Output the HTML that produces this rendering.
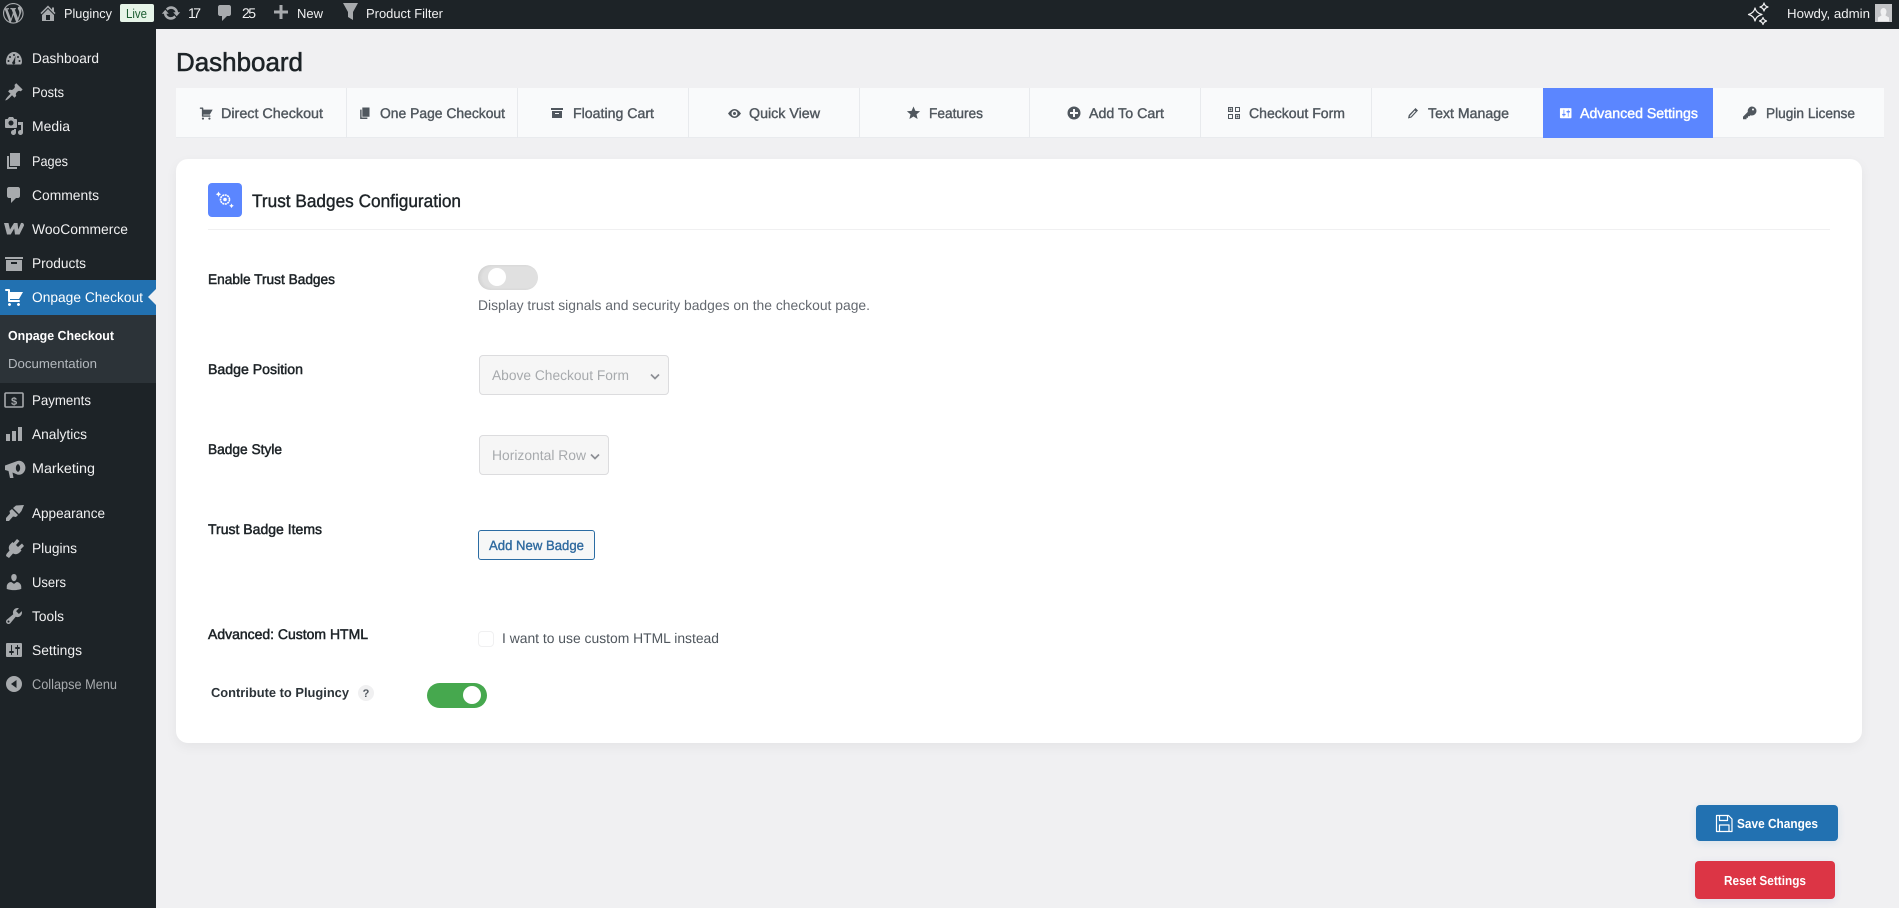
<!DOCTYPE html>
<html lang="en">
<head>
<meta charset="utf-8">
<title>Dashboard - Plugincy</title>
<style>
html,body{margin:0;padding:0;width:1899px;height:908px;overflow:hidden;background:#f0f0f2;font-family:"Liberation Sans",sans-serif}
.b{position:absolute;box-sizing:border-box}
svg{position:absolute;left:0;top:0}
text{font-family:"Liberation Sans",sans-serif;text-rendering:geometricPrecision}
.s{font-size:14px;fill:#f0f0f1}
.a{font-size:13px;fill:#f0f0f1}
.t{font-size:14px;fill:#50575e;stroke:#50575e;stroke-width:.4}
.l{font-size:14px;fill:#1d2327;stroke:#1d2327;stroke-width:.5}
.i{fill:#a7aaad}
.n{fill:#50575e}
</style>
</head>
<body>
<div class="b" style="left:0;top:0;width:1899px;height:29px;background:#1d2327"></div>
<div class="b" style="left:0;top:29px;width:156px;height:879px;background:#1d2327"></div>
<div class="b" style="left:0;top:280px;width:156px;height:35px;background:#2271b1"></div>
<div class="b" style="left:0;top:315px;width:156px;height:68px;background:#2c3338"></div>

<div class="b" style="left:176px;top:88px;width:1708px;height:50px;background:#f9fafb;border-bottom:1px solid #e9ebee"></div>
<div class="b" style="left:346px;top:88px;width:1px;height:50px;background:#e8eaed"></div>
<div class="b" style="left:517px;top:88px;width:1px;height:50px;background:#e8eaed"></div>
<div class="b" style="left:688px;top:88px;width:1px;height:50px;background:#e8eaed"></div>
<div class="b" style="left:859px;top:88px;width:1px;height:50px;background:#e8eaed"></div>
<div class="b" style="left:1029px;top:88px;width:1px;height:50px;background:#e8eaed"></div>
<div class="b" style="left:1200px;top:88px;width:1px;height:50px;background:#e8eaed"></div>
<div class="b" style="left:1371px;top:88px;width:1px;height:50px;background:#e8eaed"></div>
<div class="b" style="left:1543px;top:88px;width:170px;height:50px;background:#5b86ff"></div>

<div class="b" style="left:176px;top:159px;width:1686px;height:584px;background:#fff;border-radius:12px;box-shadow:0 4px 12px rgba(0,0,0,.05)"></div>
<div class="b" style="left:208px;top:183px;width:34px;height:34px;background:#5b86ff;border-radius:4px"></div>
<div class="b" style="left:208px;top:229px;width:1622px;height:1px;background:#f0f0f1"></div>

<div class="b" style="left:478px;top:265px;width:60px;height:25px;background:#e0e0e0;border-radius:13px;box-shadow:inset 2px 0 3px rgba(0,0,0,.07)"></div>
<div class="b" style="left:488px;top:268px;width:18px;height:18px;background:#fff;border-radius:50%"></div>
<div class="b" style="left:479px;top:355px;width:190px;height:40px;background:#f6f6f6;border:1px solid #dcdcde;border-radius:4px"></div>
<div class="b" style="left:479px;top:435px;width:130px;height:40px;background:#f6f6f6;border:1px solid #dcdcde;border-radius:4px"></div>
<div class="b" style="left:478px;top:530px;width:117px;height:30px;background:#f6f7f7;border:1px solid #2b6ca3;border-radius:3px"></div>
<div class="b" style="left:478px;top:631px;width:16px;height:16px;background:#fff;border:1px solid #f0f0f1;border-radius:4px"></div>
<div class="b" style="left:358px;top:685px;width:16px;height:16px;background:#f0f0f1;border-radius:50%"></div>
<div class="b" style="left:427px;top:683px;width:60px;height:25px;background:#46a84e;border-radius:13px"></div>
<div class="b" style="left:463px;top:686px;width:18px;height:18px;background:#fff;border-radius:50%"></div>

<div class="b" style="left:1696px;top:805px;width:142px;height:36px;background:#2271b1;border-radius:4px;box-shadow:0 2px 8px rgba(34,113,177,.12)"></div>
<div class="b" style="left:1695px;top:861px;width:140px;height:38px;background:#dc3545;border-radius:4px;box-shadow:0 2px 8px rgba(60,80,180,.1)"></div>

<svg width="1899" height="908" viewBox="0 0 1899 908" xmlns="http://www.w3.org/2000/svg">
<!-- admin bar -->
<path class="i" transform="translate(3,3) scale(1.03)" fill-rule="evenodd" d="M20 10c0-5.510-4.490-10-10-10C4.480 0 0 4.490 0 10c0 5.520 4.480 10 10 10 5.510 0 10-4.480 10-10zM7.780 15.370L4.370 6.220c.550-.020 1.170-.080 1.170-.080.500-.060.440-1.130-.060-1.110 0 0-1.450.110-2.370.110-.180 0-.370 0-.580-.010C4.120 2.690 6.870 1.110 10 1.110c2.330 0 4.450.870 6.050 2.340-.680-.110-1.650.390-1.650 1.580 0 .740.450 1.360.900 2.100.350.610.550 1.360.550 2.460 0 1.490-1.400 5-1.400 5l-3.030-8.370c.540-.020.820-.170.820-.170.500-.050.440-1.250-.060-1.220 0 0-1.440.120-2.380.120-.870 0-2.330-.120-2.330-.120-.500-.030-.560 1.200-.060 1.220l.920.080 1.260 3.410zM17.410 10c.240-.640.740-1.870.430-4.250.700 1.290 1.050 2.710 1.050 4.250 0 3.290-1.730 6.240-4.400 7.780.970-2.590 1.940-5.200 2.920-7.780zM6.100 18.090C3.120 16.650 1.110 13.530 1.110 10c0-1.300.230-2.480.720-3.590C3.250 10.300 4.670 14.200 6.100 18.090zm4.030-6.630l2.580 6.980c-.850.290-1.740.450-2.710.450-.790 0-1.570-.110-2.290-.330.810-2.380 1.620-4.730 2.420-7.100z"/>
<path class="i" transform="translate(38,3)" d="M16 8.500l1.530 1.530-1.060 1.060L10 4.620l-6.470 6.470-1.060-1.060L10 2.500l4 4v-2h2v4zm-6-2.460l6 5.990V18H4v-5.970zM12 17v-5H8v5h4z"/>
<text class="a" x="64" y="18" textLength="48" lengthAdjust="spacingAndGlyphs">Plugincy</text>
<rect x="120" y="4" width="34" height="18" rx="2" fill="#e6f4e8"/>
<text x="126" y="18" font-size="13" fill="#1a5c30" textLength="21" lengthAdjust="spacingAndGlyphs">Live</text>
<path class="i" transform="translate(161,3)" d="M10.200 3.280c3.530 0 6.430 2.610 6.920 6h2.080l-3.500 4-3.500-4h2.320c-.450-1.970-2.210-3.440-4.320-3.440-1.450 0-2.730.710-3.540 1.800L4.950 5.650c1.270-1.440 3.150-2.370 5.250-2.370zm-.400 13.440c-3.520 0-6.430-2.610-6.920-6H.800l3.500-4c1.170 1.330 2.330 2.670 3.500 4H5.480c.450 1.970 2.210 3.440 4.320 3.440 1.450 0 2.730-.710 3.540-1.810l1.710 2c-1.270 1.450-3.150 2.370-5.250 2.370z"/>
<text class="a" x="188" y="18" textLength="13" font-size="14" style="font-size:14px">17</text>
<path class="i" transform="translate(215,3)" d="M5 2h9c1.100 0 2 .9 2 2v7c0 1.100-.9 2-2 2h-2l-5 5v-5H5c-1.100 0-2-.9-2-2V4c0-1.100.9-2 2-2z"/>
<text class="a" x="242" y="18" textLength="14" style="font-size:14px">25</text>
<path class="i" transform="translate(271,3)" d="M17 7.500v3h-5.500V16h-3v-5.500H3v-3h5.500V2h3v5.500z"/>
<text class="a" x="297" y="18" textLength="26">New</text>
<path class="i" d="M343 3h15l-5 9v8l-5-3v-5z"/>
<text class="a" x="366" y="18" textLength="77" lengthAdjust="spacingAndGlyphs">Product Filter</text>
<g fill="none" stroke="#f0f0f1" stroke-width="1.200" stroke-linejoin="round">
<path d="M1755 8Q1756 13 1762 14.500Q1756 16 1755 21Q1754 16 1748.500 14.500Q1754 13 1755 8z"/>
<path d="M1764 3Q1764.500 6 1768 7Q1764.500 8 1764 11Q1763.500 8 1760 7Q1763.500 6 1764 3z"/>
<path d="M1763 17.500Q1763.500 20 1766.500 21Q1763.500 22 1763 24.500Q1762.500 22 1759.500 21Q1762.500 20 1763 17.500z"/>
</g>
<text class="a" x="1787" y="18" textLength="83" lengthAdjust="spacingAndGlyphs">Howdy, admin</text>
<rect x="1875" y="4" width="17" height="18" fill="#c3c4c7"/>
<path fill="#f0f0f1" d="M1883.500 8a3 3.500 0 0 1 3 3.500c0 2-1 3-1 4l3.500 2v4h-11v-4l3.500-2c0-1-1-2-1-4a3 3.500 0 0 1 3-3.500z"/>

<!-- sidebar icons -->
<g class="i" fill="#a7aaad">
<path fill-rule="evenodd" d="M6 61.500a8 9.500 0 0 1 16 0c0 1.500-.5 2.500-1 3H7c-.5-.5-1-1.500-1-3zM14 54a1 1 0 1 0 0 2a1 1 0 0 0 0-2zM10 56a1 1 0 1 0 0 2a1 1 0 0 0 0-2zM18 56a1 1 0 1 0 0 2a1 1 0 0 0 0-2zM8.500 60a1 1 0 1 0 0 2a1 1 0 0 0 0-2zM19.500 60a1 1 0 1 0 0 2a1 1 0 0 0 0-2zM15.500 56l-2.500 5.500a1.500 1.500 0 1 0 2 .5z"/>
<path transform="translate(4,82)" d="M10.440 3.020l1.820-1.820 6.360 6.350-1.830 1.820c-1.050-.680-2.480-.570-3.410.360l-.750.750c-.920.930-1.040 2.350-.350 3.410l-1.830 1.820-2.410-2.410-2.800 2.790c-.420.420-3.380 2.710-3.800 2.290s1.860-3.390 2.280-3.810l2.790-2.790L4.100 9.360l1.830-1.820c1.050.690 2.480.57 3.400-.360l.750-.750c.93-.92 1.050-2.350.36-3.410z"/>
<path transform="translate(4,116)" fill-rule="evenodd" d="M13 11V4c0-.550-.450-1-1-1h-1.670L9 1H5L3.670 3H2c-.550 0-1 .450-1 1v7c0 .550.450 1 1 1h10c.550 0 1-.450 1-1zM7 4.500c1.380 0 2.500 1.120 2.500 2.500S8.380 9.500 7 9.500 4.500 8.380 4.500 7 5.620 4.500 7 4.500zM14 6h5v10.500c0 1.380-1.120 2.500-2.500 2.500S14 17.880 14 16.500s1.120-2.500 2.500-2.500c.170 0 .340.020.500.050V9h-3V6zm-4 8.050V13h2v3.500c0 1.380-1.120 2.500-2.500 2.500S7 17.880 7 16.500 8.120 14 9.500 14c.170 0 .340.020.500.050z"/>
<path transform="translate(4,151)" d="M6 15V2h10v13H6zm-1 1h8v2H3V5h2v11z"/>
<path transform="translate(4,185)" d="M5 2h9c1.100 0 2 .9 2 2v7c0 1.100-.9 2-2 2h-2l-5 5v-5H5c-1.100 0-2-.9-2-2V4c0-1.100.9-2 2-2z"/>
<path transform="translate(4,219)" d="M0 4h4.500l1.500 6.500L10 4h3.500l.8 6.500L17 4q3-.5 3 2.500l-4.500 9h-4.500l-.8-6-3.500 6H3z"/>
<path transform="translate(4,253)" fill-rule="evenodd" d="M1 4h18v2H1zM2 7h16v11H2zM7 9v2h6V9z"/>
<path transform="translate(4,287)" fill="#fff" d="M6 13h9c.550 0 1 .450 1 1s-.450 1-1 1H5c-.550 0-1-.450-1-1V4H2c-.550 0-1-.450-1-1s.450-1 1-1h3c.550 0 1 .450 1 1v2h13l-4 7H6v1zm-.500 3c.830 0 1.500.670 1.500 1.500S6.330 19 5.500 19 4 18.330 4 17.500 4.670 16 5.500 16zm9 0c.830 0 1.500.670 1.500 1.500s-.670 1.500-1.500 1.500-1.500-.670-1.500-1.500.670-1.500 1.500-1.500z"/>
<path transform="translate(4,424)" d="M2 10h4v7H2zM8 7h4v10H8zM14 3h4v14h-4z"/>
<path transform="translate(4,458)" fill-rule="evenodd" d="M1 7.500L12 3.500a6.500 7 0 1 1 0 12.500L8.500 14.500 9.500 20H6L4.500 13 1 12zM14 6a4 4.500 0 0 0 0 8a4 4.500 0 0 0 0-8z"/>
<path transform="translate(4,503)" d="M20 2l-8 .5-3 2.500 6 6 2.500-3zM8 6l6 6-2 2-3-.5-4 4.500H2v-3l4-4.500-.5-2.500z"/>
<path transform="translate(4,538)" d="M13 1l2.500 2-3.500 4 2 2 4-3.500 2 2.500-3.500 3.500 1 1-2.500 2.500c-2 1.500-4 1.500-6 .5L5 20 2 18l.5-2 3-3.500c-1-2-1-4 .5-6L8.500 4l1 1z"/>
<path transform="translate(4,572)" d="M10 9.250c-2.270 0-2.730-3.440-2.730-3.440C7 4.020 7.820 2 9.970 2c2.160 0 2.980 2.020 2.710 3.810 0 0-.410 3.440-2.680 3.440zm0 2.570L12.720 10c2.390 0 4.520 2.330 4.520 4.530v2.490s-3.650 1.130-7.240 1.130c-3.650 0-7.240-1.130-7.240-1.130v-2.490c0-2.250 1.940-4.480 4.470-4.480z"/>
<path transform="translate(4,606)" fill-rule="evenodd" d="M16.680 9.770c-1.340 1.340-3.300 1.670-4.950.990l-5.410 6.520c-.990.990-2.590.990-3.580 0s-.990-2.590 0-3.570l6.520-5.420c-.680-1.650-.350-3.610.990-4.950 1.280-1.280 3.120-1.620 4.720-1.060l-2.890 2.890 2.820 2.820 2.860-2.870c.530 1.580.180 3.390-1.080 4.650zM3.810 16.210c.400.390 1.030.390 1.420 0 .400-.400.400-1.030 0-1.430-.390-.390-1.020-.390-1.420 0-.390.400-.390 1.030 0 1.430z"/>
<path transform="translate(4,640)" fill-rule="evenodd" d="M18 16V4c0-.550-.450-1-1-1H3c-.550 0-1 .450-1 1v12c0 .550.450 1 1 1h14c.550 0 1-.450 1-1zM8 11h1c.550 0 1 .450 1 1s-.450 1-1 1H8v1.500c0 .280-.220.500-.500.500s-.500-.220-.500-.500V13H6c-.550 0-1-.450-1-1s.450-1 1-1h1V5.500c0-.280.220-.500.500-.500s.500.220.500.500V11zm5-2h-1c-.550 0-1-.450-1-1s.450-1 1-1h1V5.500c0-.280.220-.500.500-.500s.500.220.500.500V7h1c.550 0 1 .450 1 1s-.450 1-1 1h-1v5.500c0 .280-.220.500-.500.500s-.500-.220-.500-.500V9z"/>
<path transform="translate(4,674)" fill-rule="evenodd" d="M10 2a8 8 0 1 0 0 16a8 8 0 0 0 0-16zM12.500 6v8L7 10z"/>
</g>
<rect x="5" y="393" width="18" height="14" rx="1" fill="none" stroke="#a7aaad" stroke-width="1.600"/>
<text x="14" y="405" font-size="11" font-weight="bold" fill="#a7aaad" text-anchor="middle">$</text>
<path d="M156 289l-8 8 8 8z" fill="#f0f0f2"/>

<!-- sidebar text -->
<text class="s" x="32" y="63" textLength="67" lengthAdjust="spacingAndGlyphs">Dashboard</text>
<text class="s" x="32" y="97" textLength="32" lengthAdjust="spacingAndGlyphs">Posts</text>
<text class="s" x="32" y="131" textLength="38" lengthAdjust="spacingAndGlyphs">Media</text>
<text class="s" x="32" y="166" textLength="36" lengthAdjust="spacingAndGlyphs">Pages</text>
<text class="s" x="32" y="200" textLength="67" lengthAdjust="spacingAndGlyphs">Comments</text>
<text class="s" x="32" y="234" textLength="96" lengthAdjust="spacingAndGlyphs">WooCommerce</text>
<text class="s" x="32" y="268" textLength="54" lengthAdjust="spacingAndGlyphs">Products</text>
<text class="s" x="32" y="302" textLength="111" lengthAdjust="spacingAndGlyphs" style="fill:#fff">Onpage Checkout</text>
<text x="8" y="340" font-size="13" font-weight="bold" fill="#fff" textLength="106" lengthAdjust="spacingAndGlyphs">Onpage Checkout</text>
<text x="8" y="368" font-size="13" fill="#b4b9be" textLength="89" lengthAdjust="spacingAndGlyphs">Documentation</text>
<text class="s" x="32" y="405" textLength="59" lengthAdjust="spacingAndGlyphs">Payments</text>
<text class="s" x="32" y="439" textLength="55" lengthAdjust="spacingAndGlyphs">Analytics</text>
<text class="s" x="32" y="473" textLength="63" lengthAdjust="spacingAndGlyphs">Marketing</text>
<text class="s" x="32" y="518" textLength="73" lengthAdjust="spacingAndGlyphs">Appearance</text>
<text class="s" x="32" y="553" textLength="45" lengthAdjust="spacingAndGlyphs">Plugins</text>
<text class="s" x="32" y="587" textLength="34" lengthAdjust="spacingAndGlyphs">Users</text>
<text class="s" x="32" y="621" textLength="32" lengthAdjust="spacingAndGlyphs">Tools</text>
<text class="s" x="32" y="655" textLength="50" lengthAdjust="spacingAndGlyphs">Settings</text>
<text class="s" x="32" y="689" textLength="85" lengthAdjust="spacingAndGlyphs" style="fill:#a7aaad">Collapse Menu</text>

<!-- heading -->
<text x="176" y="71" font-size="26" fill="#1d2327" stroke="#1d2327" stroke-width=".55" textLength="127" lengthAdjust="spacingAndGlyphs">Dashboard</text>

<!-- tabs -->
<path class="n" transform="translate(199,106) scale(.72)" d="M6 13h9c.550 0 1 .450 1 1s-.450 1-1 1H5c-.550 0-1-.450-1-1V4H2c-.550 0-1-.450-1-1s.450-1 1-1h3c.550 0 1 .450 1 1v2h13l-4 7H6v1zm-.500 3c.830 0 1.500.670 1.500 1.500S6.330 19 5.500 19 4 18.330 4 17.500 4.670 16 5.500 16zm9 0c.830 0 1.500.670 1.500 1.500s-.670 1.500-1.500 1.500-1.500-.670-1.500-1.500.670-1.500 1.500-1.500z"/>
<text class="t" x="221" y="118" textLength="102" lengthAdjust="spacingAndGlyphs">Direct Checkout</text>
<path class="n" transform="translate(358,106) scale(.72)" d="M6 15V2h10v13H6zm-1 1h8v2H3V5h2v11z"/>
<text class="t" x="380" y="118" textLength="125" lengthAdjust="spacingAndGlyphs">One Page Checkout</text>
<path class="n" fill-rule="evenodd" d="M551 108h12v2h-12zM552 111h10v7h-10zM555 113v1h4v-1z"/>
<text class="t" x="573" y="118" textLength="81" lengthAdjust="spacingAndGlyphs">Floating Cart</text>
<path class="n" fill-rule="evenodd" d="M728 113.500q6.500-9 13 0q-6.500 9-13 0zM734.500 110.500a3 3 0 1 0 0 6a3 3 0 0 0 0-6zM734.500 112a1.500 1.500 0 1 1 0 3a1.500 1.500 0 0 1 0-3z"/>
<text class="t" x="749" y="118" textLength="71" lengthAdjust="spacingAndGlyphs">Quick View</text>
<path class="n" d="M913.500 106.500l1.900 4.400 4.700.4-3.600 3.100 1.100 4.600-4.100-2.500-4.100 2.500 1.100-4.600-3.600-3.100 4.700-.4z"/>
<text class="t" x="929" y="118" textLength="54" lengthAdjust="spacingAndGlyphs">Features</text>
<path class="n" fill-rule="evenodd" d="M1074 106.500a6.500 6.500 0 1 0 0 13a6.500 6.500 0 0 0 0-13zM1073 109h2v3h3v2h-3v3h-2v-3h-3v-2h3z"/>
<text class="t" x="1089" y="118" textLength="75" lengthAdjust="spacingAndGlyphs">Add To Cart</text>
<g class="n"><path fill-rule="evenodd" d="M1228 107h5v5h-5zM1229 108v3h3v-3zM1235 107h5v5h-5zM1236 108v3h3v-3zM1228 114h5v5h-5zM1229 115v3h3v-3zM1235 114h5v5h-5zM1236 115v3h3v-3z"/><path d="M1229.500 108.500h2v2h-2zM1236.500 115.500h2v2h-2z"/></g>
<text class="t" x="1249" y="118" textLength="96" lengthAdjust="spacingAndGlyphs">Checkout Form</text>
<path class="n" fill-rule="evenodd" d="M1415.500 108l2.500 2.500-6.500 7-3.500 1 .8-3.500zM1414.800 110.500l-4.800 5.200-.3 1.200 1.200-.4 4.800-5.200z"/>
<text class="t" x="1428" y="118" textLength="81" lengthAdjust="spacingAndGlyphs">Text Manage</text>
<path fill="#fff" transform="translate(1558.500,106) scale(.72)" fill-rule="evenodd" d="M18 16V4c0-.550-.450-1-1-1H3c-.550 0-1 .450-1 1v12c0 .550.450 1 1 1h14c.550 0 1-.450 1-1zM8 11h1c.550 0 1 .450 1 1s-.450 1-1 1H8v1.500c0 .280-.220.500-.500.500s-.500-.220-.500-.500V13H6c-.550 0-1-.450-1-1s.450-1 1-1h1V5.500c0-.280.220-.500.500-.500s.500.220.500.500V11zm5-2h-1c-.550 0-1-.450-1-1s.450-1 1-1h1V5.500c0-.280.220-.500.500-.500s.500.220.500.500V7h1c.550 0 1 .450 1 1s-.450 1-1 1h-1v5.500c0 .280-.220.500-.500.500s-.500-.220-.500-.500V9z"/>
<text x="1580" y="118" font-size="14" fill="#fff" stroke="#fff" stroke-width=".45" textLength="118" lengthAdjust="spacingAndGlyphs">Advanced Settings</text>
<path class="n" fill-rule="evenodd" d="M1752 106.500a4.500 4.500 0 0 1 0 9a4 4 0 0 1-1.500-.3l-1 1h-1.500v1.500h-1.500v1.500H1743v-2.500l4.800-4.800a4.500 4.500 0 0 1 4.200-5.400zM1753 108.500a1 1 0 1 0 0 2a1 1 0 0 0 0-2z"/>
<text class="t" x="1766" y="118" textLength="89" lengthAdjust="spacingAndGlyphs">Plugin License</text>

<!-- card header -->
<circle cx="225" cy="199.500" r="4.500" fill="none" stroke="#fff" stroke-width="1.600" stroke-dasharray="2 .6"/>
<g fill="#fff">
<circle cx="225" cy="199.500" r="1.800"/>
<path d="M218.500 191.500l.9 1.800 1.800.9-1.800.9-.9 1.800-.9-1.800-1.800-.9 1.800-.9zM231.500 203.500l.8 1.500 1.500.8-1.500.8-.8 1.500-.8-1.500-1.500-.8 1.500-.8z"/>
</g>
<text x="252" y="207" font-size="18" fill="#1d2327" stroke="#1d2327" stroke-width=".4" textLength="209" lengthAdjust="spacingAndGlyphs">Trust Badges Configuration</text>

<!-- form text -->
<text class="l" x="208" y="284" textLength="127" lengthAdjust="spacingAndGlyphs">Enable Trust Badges</text>
<text x="478" y="310" font-size="14" fill="#646970" textLength="392" lengthAdjust="spacingAndGlyphs">Display trust signals and security badges on the checkout page.</text>
<text class="l" x="208" y="374" textLength="95" lengthAdjust="spacingAndGlyphs">Badge Position</text>
<text x="492" y="380" font-size="14" fill="#a7aaad" textLength="137" lengthAdjust="spacingAndGlyphs">Above Checkout Form</text>
<path d="M651 374.500l4 4 4-4" fill="none" stroke="#8c8f94" stroke-width="1.700"/>
<text class="l" x="208" y="454" textLength="74" lengthAdjust="spacingAndGlyphs">Badge Style</text>
<text x="492" y="460" font-size="14" fill="#a7aaad" textLength="94" lengthAdjust="spacingAndGlyphs">Horizontal Row</text>
<path d="M591 454.500l4 4 4-4" fill="none" stroke="#8c8f94" stroke-width="1.700"/>
<text class="l" x="208" y="534" textLength="114" lengthAdjust="spacingAndGlyphs">Trust Badge Items</text>
<text x="489" y="550" font-size="13.500" fill="#2f6a9f" stroke="#2f6a9f" stroke-width=".35" textLength="95" lengthAdjust="spacingAndGlyphs">Add New Badge</text>
<text class="l" x="208" y="639" textLength="160" lengthAdjust="spacingAndGlyphs">Advanced: Custom HTML</text>
<text x="502" y="643" font-size="14" fill="#50575e" textLength="217" lengthAdjust="spacingAndGlyphs">I want to use custom HTML instead</text>
<text x="211" y="697" font-size="13" font-weight="bold" fill="#2c3338" textLength="138" lengthAdjust="spacingAndGlyphs">Contribute to Plugincy</text>
<text x="366" y="697" font-size="11" font-weight="bold" fill="#50575e" text-anchor="middle">?</text>

<!-- buttons -->
<g fill="none" stroke="#fff" stroke-width="1.200" stroke-linejoin="round">
<path d="M1716.500 815.500h12l3.500 3.500v12.500h-15.500z"/>
<path d="M1719.500 815.500v5h8v-5M1719.500 831.500v-6.500h9.500v6.500"/>
</g>
<text x="1737" y="828" font-size="13" font-weight="bold" fill="#fff" textLength="81" lengthAdjust="spacingAndGlyphs">Save Changes</text>
<text x="1724" y="885" font-size="13" font-weight="bold" fill="#fff" textLength="82" lengthAdjust="spacingAndGlyphs">Reset Settings</text>
</svg>
</body>
</html>
